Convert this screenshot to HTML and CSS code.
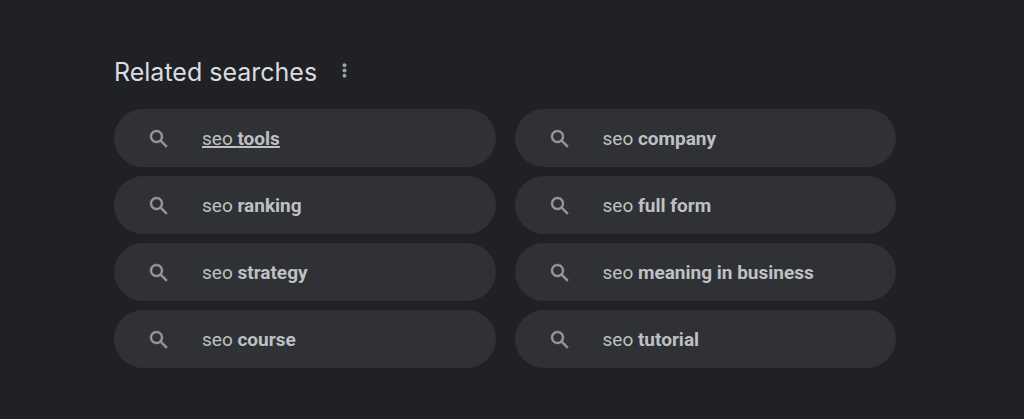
FILE: index.html
```html
<!DOCTYPE html>
<html lang="en">

<head>
    <meta charset="UTF-8">
    <title>Related searches</title>
    <meta name="viewport" content="width=device-width, initial-scale=1.0">
    <link rel="stylesheet" href="styles.css">
</head>

<body>
    <svg width="0" height="0" class="sprite" aria-hidden="true">
        <symbol id="search" viewBox="0 0 24 24">
            <path d="M20.49 19l-5.73-5.73C15.53 12.2 16 10.91 16 9.5 16 5.91 13.09 3 9.5 3S3 5.91 3 9.5 5.91 16 9.5 16c1.41 0 2.7-.47 3.77-1.24L19 20.49 20.49 19zM5 9.5C5 7.01 7.01 5 9.5 5S14 7.01 14 9.5 11.99 14 9.5 14 5 11.99 5 9.5z"/>
        </symbol>
    </svg>

    <section class="related">
        <div class="related-header">
            <h2>Related searches</h2>
            <button class="more" aria-label="About this result">
                <svg viewBox="0 0 24 24"><circle cx="12" cy="6" r="2.3"/><circle cx="12" cy="12" r="2.3"/><circle cx="12" cy="18" r="2.3"/></svg>
            </button>
        </div>
        <div class="related-list">
            <a href="#" class="pill active"><svg><use href="#search"/></svg><span>seo <b>tools</b></span></a>
            <a href="#" class="pill"><svg><use href="#search"/></svg><span>seo <b>company</b></span></a>
            <a href="#" class="pill"><svg><use href="#search"/></svg><span>seo <b>ranking</b></span></a>
            <a href="#" class="pill"><svg><use href="#search"/></svg><span>seo <b>full form</b></span></a>
            <a href="#" class="pill"><svg><use href="#search"/></svg><span>seo <b>strategy</b></span></a>
            <a href="#" class="pill"><svg><use href="#search"/></svg><span>seo <b>meaning in business</b></span></a>
            <a href="#" class="pill"><svg><use href="#search"/></svg><span>seo <b>course</b></span></a>
            <a href="#" class="pill"><svg><use href="#search"/></svg><span>seo <b>tutorial</b></span></a>
        </div>
    </section>
</body>

</html>
```

FILE: styles.css
```css
body {
    margin: 0;
    background-color: #202124;
    font-family: Roboto, Arial, sans-serif;
    color: #bdc1c6;
}

.sprite {
    display: block;
}

.related {
    padding: 52px 128px 48px 114px;
}

.related-header {
    display: flex;
    align-items: center;
    gap: 17px;
    margin-bottom: 17px;
}

h2 {
    margin: 0;
    font-family: Inter, sans-serif;
    font-size: 25px;
    font-weight: 400;
    line-height: 40px;
    color: #dadce0;
}

.more {
    display: flex;
    padding: 0 0 4px;
    border: none;
    background: none;
    cursor: pointer;
}

.more svg {
    width: 21px;
    height: 21px;
    fill: #9aa0a6;
}

.related-list {
    display: grid;
    grid-template-columns: 1fr 1fr;
    gap: 9px 19px;
}

.pill {
    display: flex;
    align-items: center;
    gap: 31px;
    height: 58px;
    padding: 2px 33px 0;
    box-sizing: border-box;
    border-radius: 29px;
    background-color: #303134;
    color: #bdc1c6;
    font-size: 19px;
    line-height: 24px;
    text-decoration: none;
}

.pill svg {
    flex: none;
    width: 24px;
    height: 24px;
    fill: #96989b;
    stroke: #96989b;
    stroke-width: 0.4;
}

.pill:hover span,
.pill.active span {
    text-decoration: underline;
    text-decoration-thickness: 2px;
}
```
